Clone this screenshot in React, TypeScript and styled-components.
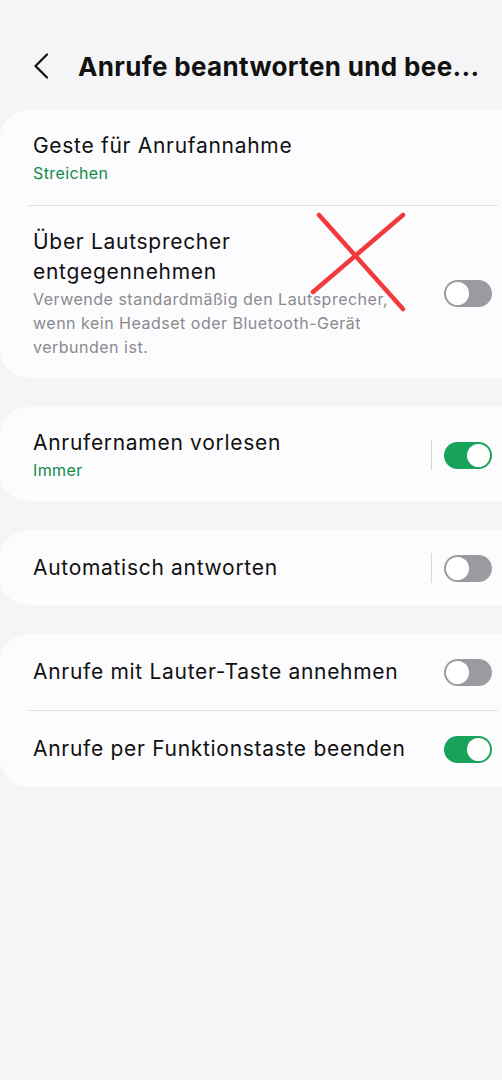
import React from "react";
import styled, { createGlobalStyle } from "styled-components";

const Global = createGlobalStyle`
  html, body { margin: 0; padding: 0; background: #f5f5f7; overflow-x: hidden; }
  body { font-family: Inter, "Noto Sans", "Liberation Sans", sans-serif; }
`;

const Page = styled.div`
  width: 502px;
  min-height: 1080px;
  background: #f5f5f7;
  display: flex;
  flex-direction: column;
  position: relative;
  overflow: hidden;
`;

const Header = styled.header`
  display: flex;
  align-items: center;
  height: 50px;
  margin-top: 41px;
  padding-left: 30px;
  gap: 26px;
`;

const BackButton = styled.button`
  border: 0;
  background: none;
  padding: 0;
  width: 22px;
  height: 30px;
  display: flex;
  align-items: center;
  justify-content: center;
`;

const Title = styled.h1`
  margin: 0;
  font-size: 26px;
  font-weight: 700;
  color: #111;
  letter-spacing: 0.35px;
  white-space: nowrap;
`;

const List = styled.div`
  display: flex;
  flex-direction: column;
  gap: 29px;
  margin-top: 19px;
`;

const Card = styled.section`
  background: #fcfcfe;
  border-radius: 28px;
  margin-right: -30px;
  padding-right: 30px;
  display: flex;
  flex-direction: column;
`;

const Row = styled.div<{ $pt: number; $pb: number }>`
  display: flex;
  align-items: center;
  padding: ${(p) => p.$pt}px 10px ${(p) => p.$pb}px 33px;
  gap: 12px;
`;

const Texts = styled.div`
  flex: 1;
  display: flex;
  flex-direction: column;
`;

const RowTitle = styled.div`
  font-size: 21px;
  line-height: 30px;
  color: #111;
  letter-spacing: 0.7px;
`;

const Sub = styled.div`
  font-size: 16px;
  line-height: 24px;
  color: #138a4a;
  letter-spacing: 0.4px;
`;

const Desc = styled.div`
  font-size: 16px;
  line-height: 24px;
  color: #8a8a8e;
  letter-spacing: 0.5px;
  max-width: 380px;
`;

const Divider = styled.div`
  height: 1px;
  background: #e3e3e6;
  margin: 0 4px 0 27px;
`;

const VLine = styled.div`
  width: 1px;
  height: 30px;
  background: #d8d8dc;
`;

const Track = styled.div<{ $on: boolean }>`
  width: 48px;
  height: 27px;
  border-radius: 14px;
  background: ${(p) => (p.$on ? "#17a45a" : "#9b9b9f")};
  position: relative;
  flex-shrink: 0;
`;

const Knob = styled.div<{ $on: boolean }>`
  position: absolute;
  top: 2px;
  left: ${(p) => (p.$on ? "23px" : "2px")};
  width: 23px;
  height: 23px;
  border-radius: 50%;
  background: #fff;
`;

const Toggle = ({ on }: { on: boolean }) => (
  <Track $on={on}>
    <Knob $on={on} />
  </Track>
);

const Cross = styled.svg`
  position: absolute;
  left: 308px;
  top: 208px;
  width: 102px;
  height: 108px;
  pointer-events: none;
`;

export default function App() {
  return (
    <Page>
      <Global />
      <Header>
        <BackButton aria-label="Zurück">
          <svg width="16" height="26" viewBox="0 0 16 26" fill="none">
            <path d="M14 1.5 L2.5 13 L14 24.5" stroke="#111" strokeWidth="2.2" strokeLinecap="round" strokeLinejoin="round" />
          </svg>
        </BackButton>
        <Title>Anrufe beantworten und bee...</Title>
      </Header>
      <List>
        <Card>
          <Row $pt={21} $pb={20}>
            <Texts>
              <RowTitle>Geste für Anrufannahme</RowTitle>
              <Sub>Streichen</Sub>
            </Texts>
          </Row>
          <Divider />
          <Row $pt={21} $pb={19}>
            <Texts>
              <RowTitle>Über Lautsprecher<br />entgegennehmen</RowTitle>
              <Desc>Verwende standardmäßig den Lautsprecher, wenn kein Headset oder Bluetooth-Gerät verbunden ist.</Desc>
            </Texts>
            <Toggle on={false} />
          </Row>
        </Card>
        <Card>
          <Row $pt={21} $pb={19}>
            <Texts>
              <RowTitle>Anrufernamen vorlesen</RowTitle>
              <Sub>Immer</Sub>
            </Texts>
            <VLine />
            <Toggle on={true} />
          </Row>
        </Card>
        <Card>
          <Row $pt={23} $pb={22}>
            <Texts>
              <RowTitle>Automatisch antworten</RowTitle>
            </Texts>
            <VLine />
            <Toggle on={false} />
          </Row>
        </Card>
        <Card>
          <Row $pt={23} $pb={23}>
            <Texts>
              <RowTitle>Anrufe mit Lauter-Taste annehmen</RowTitle>
            </Texts>
            <Toggle on={false} />
          </Row>
          <Divider />
          <Row $pt={23} $pb={23}>
            <Texts>
              <RowTitle>Anrufe per Funktionstaste beenden</RowTitle>
            </Texts>
            <Toggle on={true} />
          </Row>
        </Card>
      </List>
      <Cross viewBox="0 0 102 108">
        <path d="M11 7 L95 101" stroke="#f23a3c" strokeWidth="4.5" strokeLinecap="round" />
        <path d="M95 7 L5 84" stroke="#f23a3c" strokeWidth="4.5" strokeLinecap="round" />
      </Cross>
    </Page>
  );
}
